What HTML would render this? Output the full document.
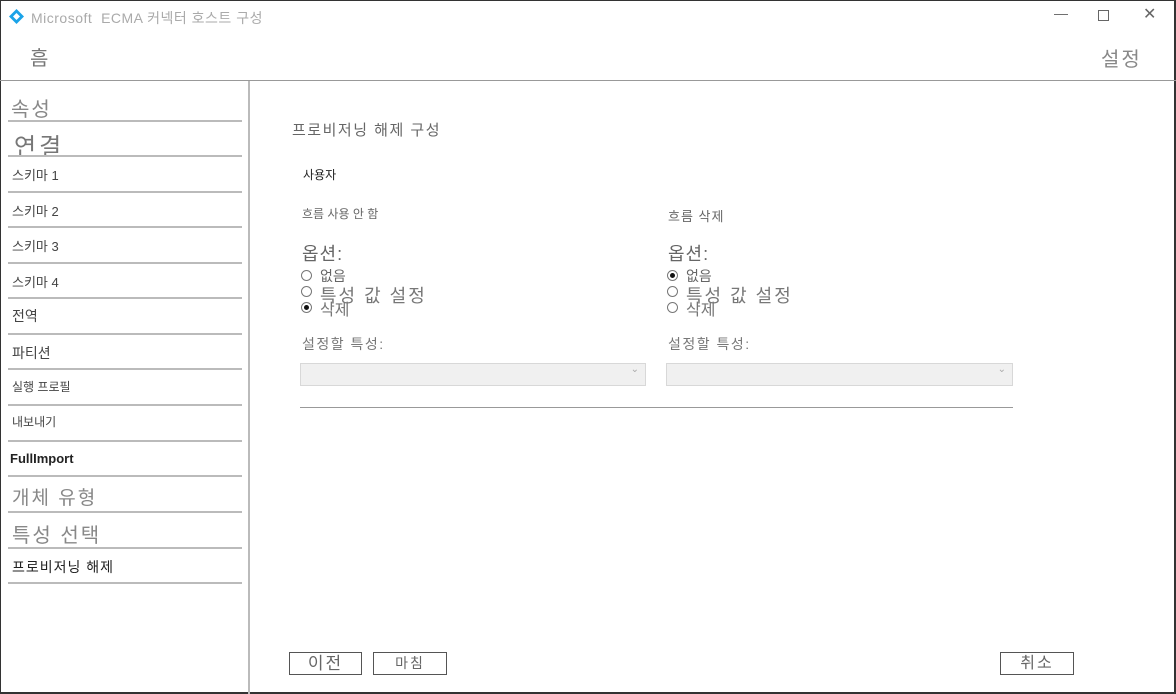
<!DOCTYPE html><html><head><meta charset="utf-8"><style>
body{margin:0;width:1176px;height:694px;overflow:hidden;background:#fff;font-family:"Liberation Sans","Noto Sans CJK KR",sans-serif;position:relative;color:#333}
.a{position:absolute;white-space:nowrap}
.sep{position:absolute;left:8px;width:234px;height:2px;background:#bbb}
.r{position:absolute;width:11px;height:11px;border:1px solid #777;border-radius:50%;box-sizing:border-box;background:#fff}
.r.on::after{content:"";position:absolute;left:2px;top:2px;width:5px;height:5px;border-radius:50%;background:#111}
.sel{position:absolute;height:23px;background:#f0f0f0;border:1px solid #d8d8d8;box-sizing:border-box}
.sel::after{content:"⌄";position:absolute;right:6px;top:0;font-size:10px;color:#aaa}
.btn{position:absolute;height:23px;border:1px solid #555;box-sizing:border-box;text-align:center;color:#666;font-size:17px;line-height:21px;letter-spacing:2px}
</style></head><body>
<div class="a" style="left:0;top:0;width:1176px;height:1px;background:#333"></div>
<div class="a" style="left:0;top:0;width:1px;height:694px;background:#333"></div>
<div class="a" style="right:0;top:0;width:2px;height:694px;background:#333"></div>
<div class="a" style="left:0;bottom:0;width:1176px;height:2px;background:#333"></div>
<svg class="a" style="left:9px;top:9px" width="15" height="15" viewBox="0 0 15 15"><path d="M7.5 0L15 7.5 7.5 15 0 7.5z" fill="#1aa3e8"/><path d="M7.5 4L11 7.5 7.5 11 4 7.5z" fill="#fff"/></svg>
<div class="a" style="left:31px;top:8px;font-size:14px;color:#aaa;letter-spacing:0.5px">Microsoft&nbsp; ECMA 커넥터 호스트 구성</div>
<div class="a" style="left:1054px;top:5px;font-size:14px;color:#666">—</div>
<div class="a" style="left:1098px;top:10px;width:9px;height:9px;border:1px solid #666"></div>
<div class="a" style="left:1143px;top:4px;font-size:16px;color:#666">✕</div>
<div class="a" style="left:30px;top:42px;font-size:20px;color:#777">흠</div>
<div class="a" style="left:1101px;top:43px;font-size:20px;color:#888;letter-spacing:2px">설정</div>
<div class="a" style="left:0;top:80px;width:1176px;height:1px;background:#999"></div>
<div class="a" style="left:248px;top:81px;width:2px;height:613px;background:#bbb"></div>
<div class="a" style="left:11px;top:93px;font-size:20px;color:#888;letter-spacing:2px">속성</div>
<div class="a" style="left:14px;top:127px;font-size:24px;color:#777;letter-spacing:3px">연결</div>
<div class="a" style="left:12px;top:165px;font-size:13px;color:#444">스키마 1</div>
<div class="a" style="left:12px;top:201px;font-size:13px;color:#444">스키마 2</div>
<div class="a" style="left:12px;top:236px;font-size:13px;color:#444">스키마 3</div>
<div class="a" style="left:12px;top:272px;font-size:13px;color:#444">스키마 4</div>
<div class="a" style="left:12px;top:306px;font-size:14px;color:#444">전역</div>
<div class="a" style="left:12px;top:343px;font-size:14px;color:#444">파티션</div>
<div class="a" style="left:12px;top:378px;font-size:12px;color:#444">실행 프로필</div>
<div class="a" style="left:12px;top:413px;font-size:12px;color:#444">내보내기</div>
<div class="a" style="left:10px;top:451px;font-size:13px;font-weight:bold;color:#222">FullImport</div>
<div class="a" style="left:12px;top:483px;font-size:19px;color:#888;letter-spacing:2px">개체 유형</div>
<div class="a" style="left:12px;top:519px;font-size:20px;color:#888;letter-spacing:2px">특성 선택</div>
<div class="a" style="left:12px;top:557px;font-size:14px;color:#222;letter-spacing:1px">프로비저닝 해제</div>
<div class="sep" style="top:120px"></div><div class="sep" style="top:155px"></div><div class="sep" style="top:191px"></div><div class="sep" style="top:226px"></div><div class="sep" style="top:262px"></div><div class="sep" style="top:297px"></div><div class="sep" style="top:333px"></div><div class="sep" style="top:368px"></div><div class="sep" style="top:404px"></div><div class="sep" style="top:440px"></div><div class="sep" style="top:475px"></div><div class="sep" style="top:511px"></div><div class="sep" style="top:547px"></div><div class="sep" style="top:582px"></div>
<div class="a" style="left:292px;top:119px;font-size:15px;color:#666;letter-spacing:1.5px">프로비저닝 해제 구성</div>
<div class="a" style="left:303px;top:166px;font-size:12px;color:#222">사용자</div>
<div class="a" style="left:302px;top:205px;font-size:12px;color:#666">흐름 사용 안 함</div>
<div class="a" style="left:668px;top:206px;font-size:13px;color:#666;letter-spacing:1px">흐름 삭제</div>
<div class="a" style="left:302px;top:240px;font-size:18px;color:#666;letter-spacing:1px">옵션:</div>
<div class="a" style="left:668px;top:240px;font-size:18px;color:#666;letter-spacing:1px">옵션:</div>
<div class="r" style="left:301px;top:270px"></div><div class="a" style="left:320px;top:266px;font-size:14px;color:#666">없음</div>
<div class="r" style="left:301px;top:286px"></div><div class="a" style="left:320px;top:282px;font-size:18px;color:#777;letter-spacing:2px">특성 값 설정</div>
<div class="r on" style="left:301px;top:302px"></div><div class="a" style="left:320px;top:296px;font-size:16px;color:#777">삭제</div>
<div class="r on" style="left:667px;top:270px"></div><div class="a" style="left:686px;top:266px;font-size:14px;color:#666">없음</div>
<div class="r" style="left:667px;top:286px"></div><div class="a" style="left:686px;top:282px;font-size:18px;color:#777;letter-spacing:2px">특성 값 설정</div>
<div class="r" style="left:667px;top:302px"></div><div class="a" style="left:686px;top:296px;font-size:16px;color:#777">삭제</div>
<div class="a" style="left:302px;top:334px;font-size:14px;color:#777;letter-spacing:1.5px">설정할 특성:</div>
<div class="a" style="left:668px;top:334px;font-size:14px;color:#777;letter-spacing:1.5px">설정할 특성:</div>
<div class="sel" style="left:300px;top:363px;width:346px"></div>
<div class="sel" style="left:666px;top:363px;width:347px"></div>
<div class="a" style="left:300px;top:407px;width:713px;height:1px;background:#999"></div>
<div class="btn" style="left:289px;top:652px;width:73px">이전</div>
<div class="btn" style="left:373px;top:652px;width:74px;font-size:14px">마침</div>
<div class="btn" style="left:1000px;top:652px;width:74px;font-size:16px">취소</div>
</body></html>
